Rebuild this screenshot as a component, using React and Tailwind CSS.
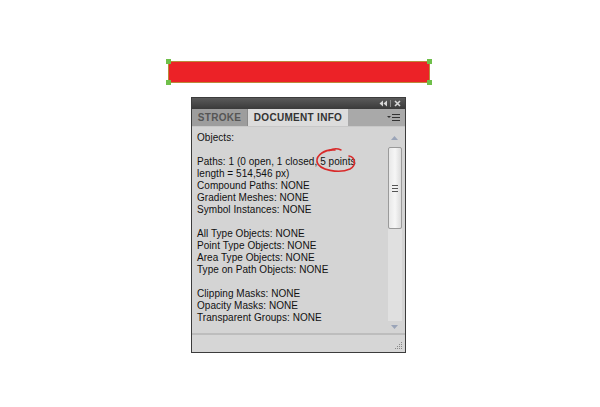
import React from "react";

const lines1 = [
  "Paths: 1 (0 open, 1 closed, 5 points",
  "length = 514,546 px)",
  "Compound Paths: NONE",
  "Gradient Meshes: NONE",
  "Symbol Instances: NONE",
];
const lines2 = [
  "All Type Objects: NONE",
  "Point Type Objects: NONE",
  "Area Type Objects: NONE",
  "Type on Path Objects: NONE",
];
const lines3 = [
  "Clipping Masks: NONE",
  "Opacity Masks: NONE",
  "Transparent Groups: NONE",
];

function Block({ lines }) {
  return (
    <div className="flex flex-col">
      {lines.map((l) => (
        <div key={l} className="h-[12px] leading-[12px] whitespace-nowrap">{l}</div>
      ))}
    </div>
  );
}

export default function App() {
  return (
    <div className="w-[600px] h-[407px] bg-white overflow-hidden flex flex-col" style={{ fontFamily: "'Liberation Sans', sans-serif" }}>
      {/* red rectangle */}
      <div className="relative ml-[168px] mt-[61px] w-[262px] h-[22px] bg-[#ec2227] border border-[#b98a3a]">
        <span className="absolute -left-[3px] -top-[3px] w-[5px] h-[5px] bg-[#6fbf4a]" />
        <span className="absolute -right-[3px] -top-[3px] w-[5px] h-[5px] bg-[#6fbf4a]" />
        <span className="absolute -left-[3px] -bottom-[3px] w-[5px] h-[5px] bg-[#6fbf4a]" />
        <span className="absolute -right-[3px] -bottom-[3px] w-[5px] h-[5px] bg-[#6fbf4a]" />
      </div>

      {/* panel */}
      <div className="ml-[191px] mt-[14px] w-[215px] h-[256px] border border-[#3c3c3c] flex flex-col bg-[#d6d6d6]">
        {/* title bar */}
        <div className="h-[11px] bg-gradient-to-b from-[#5a5a5a] to-[#3a3a3a] flex items-center justify-end pr-[4px] gap-[3px]">
          <svg width="8" height="7" viewBox="0 0 8 7">
            <path d="M4 0.5 L0.5 3.5 L4 6.5 Z" fill="#d8d8d8" />
            <path d="M8 0.5 L4.5 3.5 L8 6.5 Z" fill="#d8d8d8" />
          </svg>
          <span className="w-px h-[7px] bg-[#8a8a8a]" />
          <svg width="7" height="7" viewBox="0 0 7 7">
            <path d="M1 1 L6 6 M6 1 L1 6" stroke="#d8d8d8" strokeWidth="1.6" />
          </svg>
        </div>
        {/* tabs */}
        <div className="h-[18px] bg-[#a9a9a9] flex items-stretch border-b border-[#c8c8c8] text-[10px] font-bold uppercase">
          <div className="w-[56px] flex items-center justify-center bg-[#9d9d9d] text-[#555] border-r border-[#8a8a8a] tracking-[0.3px]">STROKE</div>
          <div className="w-[100px] flex items-center justify-center bg-[#dcdcdc] text-[#333] tracking-[0.3px]">DOCUMENT INFO</div>
          <div className="flex-1 flex items-center justify-end pr-[4px]">
            <svg width="14" height="9" viewBox="0 0 14 9">
              <path d="M0 3 L4 3 L2 5 Z" fill="#333" />
              <rect x="5" y="1" width="8" height="1" fill="#333" />
              <rect x="5" y="4" width="8" height="1" fill="#333" />
              <rect x="5" y="7" width="8" height="1" fill="#333" />
            </svg>
          </div>
        </div>
        {/* content */}
        <div className="flex-1 flex min-h-0 bg-[#d4d4d4]">
          <div className="relative flex-1 flex flex-col gap-[12px] pl-[5px] pt-[5px] text-[10px] tracking-[0.05px] text-[#111]">
            <div className="h-[12px] leading-[12px]">Objects:</div>
            <Block lines={lines1} />
            <Block lines={lines2} />
            <Block lines={lines3} />
            <svg className="absolute left-[119px] top-[20px]" width="50" height="30" viewBox="0 0 50 30">
              <path d="M24 3 C 14 2, 5 8, 6 15 C 8 23, 28 27, 39 22 C 46 18, 44 10, 38 9" fill="none" stroke="#d92a2a" strokeWidth="1.6" strokeLinecap="round" />
              <path d="M18 3.5 C 22 1.5, 27 1.5, 30 3" fill="none" stroke="#d92a2a" strokeWidth="1.4" strokeLinecap="round" />
            </svg>
          </div>
          {/* scrollbar */}
          <div className="w-[17px] flex flex-col items-center pt-[5px] pb-[2px] mr-[2px]">
            <svg width="9" height="8" viewBox="0 0 9 8" className="mt-[2px]"><path d="M1 6 L4.5 2 L8 6 Z" fill="#9aa4b8" /></svg>
            <div className="mt-[5px] w-[14px] h-[82px] border border-[#9a9a9a] rounded-[2px] bg-gradient-to-r from-[#e8e8e8] via-[#f6f6f6] to-[#dcdcdc] flex items-center justify-center">
              <div className="flex flex-col gap-[2px]">
                <div className="w-[6px] h-px bg-[#555]" />
                <div className="w-[6px] h-px bg-[#555]" />
                <div className="w-[6px] h-px bg-[#555]" />
              </div>
            </div>
            <div className="flex-1 w-[14px] bg-[#e0e0e0]" />
            <svg width="9" height="8" viewBox="0 0 9 8" className="mt-[2px]"><path d="M1 2 L4.5 6 L8 2 Z" fill="#9aa4b8" /></svg>
          </div>
        </div>
        {/* status bar */}
        <div className="h-[19px] border-t-2 border-[#bdbdbd] bg-[#d6d6d6] flex items-end justify-end p-[2px]">
          <svg width="8" height="8" viewBox="0 0 8 8">
            <rect x="6" y="0" width="1" height="1" fill="#888" />
            <rect x="4" y="2" width="1" height="1" fill="#888" />
            <rect x="6" y="2" width="1" height="1" fill="#888" />
            <rect x="2" y="4" width="1" height="1" fill="#888" />
            <rect x="4" y="4" width="1" height="1" fill="#888" />
            <rect x="6" y="4" width="1" height="1" fill="#888" />
            <rect x="0" y="6" width="1" height="1" fill="#888" />
            <rect x="2" y="6" width="1" height="1" fill="#888" />
            <rect x="4" y="6" width="1" height="1" fill="#888" />
            <rect x="6" y="6" width="1" height="1" fill="#888" />
          </svg>
        </div>
      </div>
    </div>
  );
}
